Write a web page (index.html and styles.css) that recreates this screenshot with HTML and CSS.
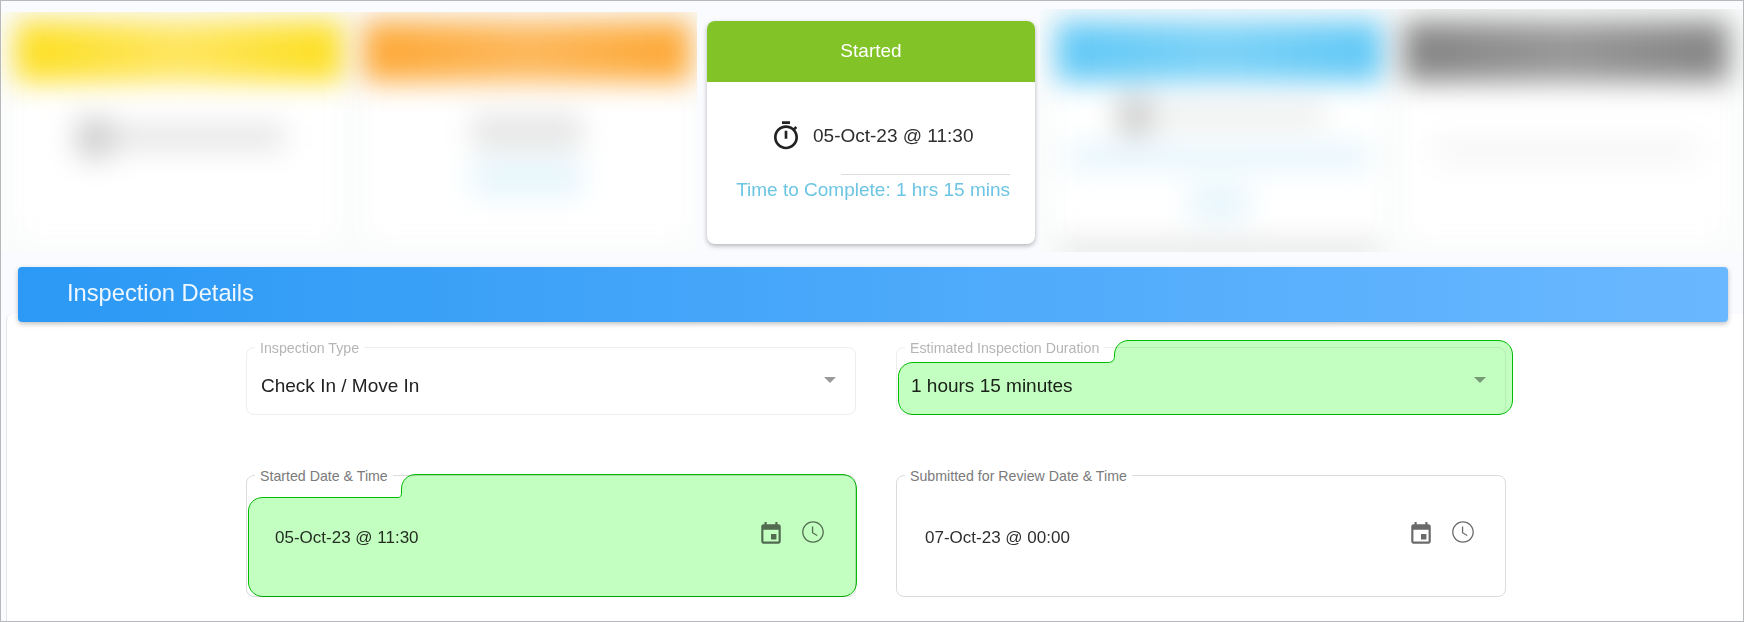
FILE: index.html
```html
<!DOCTYPE html>
<html lang="en">
<head>
  <meta charset="UTF-8">
  <meta name="viewport" content="width=device-width, initial-scale=1.0">
  <title>Inspection Details</title>
  <link rel="stylesheet" href="styles.css">
</head>
<body>
  <div class="frame">
    <div class="status-row">
      <div class="blur-panel panel-left">
        <div class="blur-card">
          <div class="blur-head head-yellow"></div>
          <div class="blur-body body-low">
            <div class="blur-line line-wide"><span class="blur-dot"></span></div>
          </div>
        </div>
        <div class="blur-card">
          <div class="blur-head head-orange"></div>
          <div class="blur-body">
            <div class="blur-line line-short line-tall"></div>
            <div class="blur-line line-short line-tall line-blue"></div>
          </div>
        </div>
      </div>

      <div class="status-card">
        <div class="status-head">Started</div>
        <div class="status-body">
          <div class="status-date">
            <svg class="timer-icon" viewBox="0 0 24 24"><path d="M15 1H9v2h6V1zm-4 13h2V8h-2v6zm8.03-6.61 1.42-1.42c-.43-.51-.9-.99-1.41-1.41l-1.42 1.42C16.07 4.74 14.12 4 12 4c-4.97 0-9 4.03-9 9s4.02 9 9 9 9-4.03 9-9c0-2.12-.74-4.07-1.97-5.61zM12 20c-3.87 0-7-3.13-7-7s3.13-7 7-7 7 3.13 7 7-3.13 7-7 7z"/></svg>
            <span>05-Oct-23 @ 11:30</span>
          </div>
          <div class="status-rule"></div>
          <div class="status-time">Time to Complete: 1 hrs 15 mins</div>
        </div>
      </div>

      <div class="blur-panel panel-right">
        <div class="blur-card card-shadow">
          <div class="blur-head head-blue"></div>
          <div class="blur-body body-top">
            <div class="blur-line line-wide line-faint"><span class="blur-dot"></span></div>
            <div class="blur-line line-full line-blue"></div>
            <div class="blur-line line-spot line-blue"></div>
          </div>
        </div>
        <div class="blur-card">
          <div class="blur-head head-grey"></div>
          <div class="blur-body">
            <div class="blur-line line-full line-ghost"></div>
          </div>
        </div>
      </div>
    </div>

    <div class="section-bar">Inspection Details</div>

    <div class="details">
      <div class="field-grid">
        <div class="field field-short field-faint">
          <span class="field-label">Inspection Type</span>
          <span class="field-value value-select">Check In / Move In</span>
          <span class="select-arrow"></span>
        </div>

        <div class="field field-short field-faint">
          <span class="field-label">Estimated Inspection Duration</span>
          <span class="field-value value-select">1 hours 15 minutes</span>
          <span class="select-arrow"></span>
          <svg class="diff-mark mark-duration" viewBox="0 0 615 75">
            <path d="M.5 36.500C.5 28.500 7 22.500 15 22.500H210C214.500 22.500 216.500 20 216.500 16V15C216.500 6.500 222.500 .5 231 .5H600C608.500 .5 614.500 6.500 614.500 15V60C614.500 68.500 608.500 74.500 600 74.500H15C7 74.500 .5 68.500 .5 60Z"/>
          </svg>
        </div>

        <div class="field field-tall">
          <span class="field-label">Started Date &amp; Time</span>
          <span class="field-value">05-Oct-23 @ 11:30</span>
          <div class="field-icons">
            <svg class="field-icon" viewBox="0 0 24 24"><path d="M17 12h-5v5h5v-5zM16 1v2H8V1H6v2H5c-1.110 0-1.990.9-1.990 2L3 19c0 1.100.89 2 2 2h14c1.100 0 2-.9 2-2V5c0-1.100-.9-2-2-2h-1V1h-2zm3 18H5V8h14v11z"/></svg>
            <svg class="field-icon icon-clock" viewBox="0 0 24 24"><path d="M11.990 2C6.470 2 2 6.480 2 12s4.470 10 9.990 10C17.520 22 22 17.520 22 12S17.520 2 11.990 2zM12 20.800c-4.860 0-8.800-3.940-8.800-8.800S7.140 3.200 12 3.200s8.800 3.940 8.800 8.800-3.940 8.800-8.800 8.800zM12.200 7h-1.200v6l4.600 2.800.6-1-4-2.400z"/></svg>
          </div>
          <svg class="diff-mark mark-started" viewBox="0 0 609 123">
            <path d="M.5 37C.5 29 7 23.500 15 23.500H150C152.500 23.500 153.500 21.500 153.500 19V15C153.500 6.500 159.500 .5 168 .5H594C602.500 .5 608.500 6.500 608.500 15V108C608.500 116.500 602.500 122.500 594 122.500H15C7 122.500 .5 116.500 .5 108Z"/>
          </svg>
        </div>

        <div class="field field-tall">
          <span class="field-label">Submitted for Review Date &amp; Time</span>
          <span class="field-value">07-Oct-23 @ 00:00</span>
          <div class="field-icons">
            <svg class="field-icon" viewBox="0 0 24 24"><path d="M17 12h-5v5h5v-5zM16 1v2H8V1H6v2H5c-1.110 0-1.990.9-1.990 2L3 19c0 1.100.89 2 2 2h14c1.100 0 2-.9 2-2V5c0-1.100-.9-2-2-2h-1V1h-2zm3 18H5V8h14v11z"/></svg>
            <svg class="field-icon icon-clock" viewBox="0 0 24 24"><path d="M11.990 2C6.470 2 2 6.480 2 12s4.470 10 9.990 10C17.520 22 22 17.520 22 12S17.520 2 11.990 2zM12 20.800c-4.860 0-8.800-3.940-8.800-8.800S7.140 3.200 12 3.200s8.800 3.940 8.800 8.800-3.940 8.800-8.800 8.800zM12.200 7h-1.200v6l4.600 2.800.6-1-4-2.400z"/></svg>
          </div>
        </div>
      </div>
    </div>
  </div>
</body>
</html>
```

FILE: styles.css
```css
* {
  box-sizing: border-box;
}

body {
  margin: 0;
  font-family: 'Liberation Sans', Arial, sans-serif;
  color: #2e2e2e;
}

.frame {
  height: 622px;
  border: 1px solid #b6b8bb;
  background-color: #f9fbfe;
  overflow: hidden;
}

/* top status cards */
.status-row {
  display: flex;
  align-items: flex-start;
  height: 265px;
}

.blur-panel {
  display: flex;
  overflow: hidden;
  background-color: #fbfcfc;
}

.panel-left {
  width: 696px;
  height: 240px;
  margin-top: 11px;
  padding: 9px 6px 0 14px;
  gap: 20px;
}

.panel-right {
  flex: 1;
  height: 243px;
  margin-top: 8px;
  margin-left: 5px;
  padding: 12px 14px 0 16px;
  gap: 20px;
}

.blur-card {
  flex: 1;
  height: 223px;
  background-color: #fff;
  box-shadow: 0 2px 4px rgba(0, 0, 0, 0.05);
  filter: blur(14px);
}

.card-shadow {
  box-shadow: 0 12px 6px -4px rgba(0, 0, 0, 0.22);
}

.blur-head {
  height: 61px;
}

.head-yellow {
  background: linear-gradient(90deg, #fde02a 10%, #fee662 50%, #fde02a 90%);
}

.head-orange {
  background: linear-gradient(90deg, #fdab3c 10%, #fdb85c 50%, #fdab3c 90%);
}

.head-blue {
  background: linear-gradient(90deg, #66caf6 10%, #7dd2f7 50%, #66caf6 90%);
}

.head-grey {
  background: linear-gradient(90deg, #888 10%, #989898 50%, #888 90%);
}

.blur-body {
  display: flex;
  flex-direction: column;
  align-items: center;
  gap: 10px;
  padding-top: 32px;
}

.body-low {
  padding-top: 42px;
}

.body-top {
  padding-top: 20px;
  gap: 16px;
}

.blur-line {
  position: relative;
  height: 26px;
  background-color: #e6e6e6;
}

.line-wide {
  width: 210px;
}

.line-short {
  width: 110px;
}

.line-tall {
  height: 36px;
}

.line-full {
  width: 300px;
}

.line-spot {
  width: 60px;
  height: 34px;
}

.line-blue {
  background-color: #e6f6fc;
}

.line-faint {
  background-color: #eee;
}

.line-ghost {
  width: 260px;
  margin-top: 24px;
  background-color: #f6f6f6;
}

.blur-dot {
  position: absolute;
  top: -6px;
  left: 4px;
  width: 34px;
  height: 40px;
  background-color: #cfcfcf;
}

.status-card {
  width: 328px;
  height: 223px;
  margin-top: 20px;
  margin-left: 10px;
  background-color: #fff;
  border-radius: 8px;
  overflow: hidden;
  box-shadow: 0 2px 5px rgba(0, 0, 0, 0.28);
}

.status-head {
  height: 61px;
  line-height: 59px;
  text-align: center;
  font-size: 19px;
  color: #fff;
  background-color: #82c428;
}

.status-body {
  display: flex;
  flex-direction: column;
  padding-top: 38px;
}

.status-date {
  display: flex;
  align-items: center;
  gap: 11px;
  margin-left: 63px;
  height: 32px;
  font-size: 19px;
}

.timer-icon {
  width: 32px;
  height: 32px;
  fill: #222;
}

.status-rule {
  width: 169px;
  height: 1px;
  margin: 22px 0 0 134px;
  background-color: #ddd;
}

.status-time {
  margin-top: 4px;
  text-align: right;
  padding-right: 25px;
  font-size: 19px;
  color: #6cc5e2;
}

/* section bar */
.section-bar {
  position: relative;
  z-index: 1;
  height: 55px;
  margin: 1px 15px 0 17px;
  padding-left: 49px;
  line-height: 53px;
  font-size: 23.7px;
  color: rgba(255, 255, 255, 0.92);
  background: linear-gradient(90deg, #2b99f5, #6ab8ff);
  border-radius: 4px;
  box-shadow: 0 2px 5px rgba(0, 0, 0, 0.25);
}

/* form */
.details {
  margin: -8px 0 0 5px;
  height: 320px;
  padding: 33px 0 0 239px;
  background-color: #fff;
  border-left: 1px solid #e6e6e6;
  border-top-left-radius: 6px;
}

.field-grid {
  display: grid;
  grid-template-columns: 610px 610px;
  grid-template-rows: 68px 122px;
  column-gap: 40px;
  row-gap: 60px;
}

.field {
  position: relative;
  display: flex;
  align-items: center;
  border: 1px solid #dcdcdc;
  border-radius: 8px;
}

.field-faint {
  border-color: #eee;
}

.field-faint .field-label {
  color: #b5b5b5;
}

.field-label {
  position: absolute;
  top: -8px;
  left: 8px;
  padding: 0 5px;
  font-size: 14.2px;
  line-height: 16px;
  color: #7a7a7a;
  background-color: #fff;
}

.field-value {
  margin: 4px 0 0 28px;
  font-size: 17px;
  color: #2e2e2e;
}

.value-select {
  margin: 9px 0 0 14px;
  font-size: 19px;
  color: #222;
}

.select-arrow {
  position: absolute;
  top: 29px;
  right: 19px;
  border-left: 6px solid transparent;
  border-right: 6px solid transparent;
  border-top: 6px solid #9a9a9a;
}

.field-icons {
  position: absolute;
  top: 45px;
  right: 29px;
  display: flex;
  gap: 16px;
}

.field-icon {
  width: 26px;
  height: 26px;
  fill: #6a6a6a;
}

.icon-clock {
  margin-top: -2px;
}

/* changed value highlight, drawn over the field */
.diff-mark {
  position: absolute;
  fill: #c3ffc0;
  stroke: #00bb00;
  stroke-width: 1;
  mix-blend-mode: multiply;
}

.mark-duration {
  top: -8px;
  left: 1px;
  width: 615px;
  height: 75px;
}

.mark-started {
  top: -2px;
  left: 1px;
  width: 609px;
  height: 123px;
}
```
